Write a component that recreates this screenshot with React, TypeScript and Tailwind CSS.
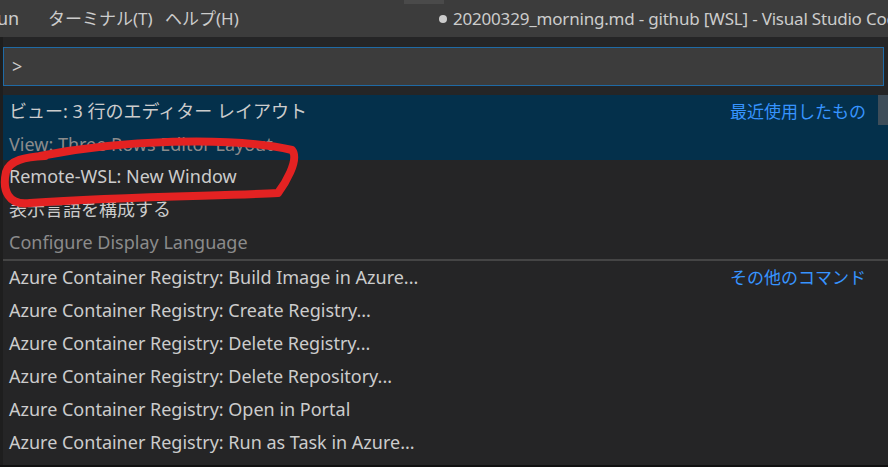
import React from 'react';

const FONT = { fontFamily: '"Noto Sans", "Noto Sans CJK JP", sans-serif' };

type Row = { label: string; detail?: string; tag?: string; selected?: boolean };

const recent: Row[] = [
  { label: 'ビュー: 3 行のエディター レイアウト', detail: 'View: Three Rows Editor Layout', tag: '最近使用したもの', selected: true },
  { label: 'Remote-WSL: New Window' },
  { label: '表示言語を構成する', detail: 'Configure Display Language' },
];

const others = [
  'Azure Container Registry: Build Image in Azure...',
  'Azure Container Registry: Create Registry...',
  'Azure Container Registry: Delete Registry...',
  'Azure Container Registry: Delete Repository...',
  'Azure Container Registry: Open in Portal',
  'Azure Container Registry: Run as Task in Azure...',
];

const CommandRow = ({ row }: { row: Row }) => (
  <div className={`flex pl-[6px] pr-[22px] ${row.selected ? 'bg-[#04304b]' : ''}`}>
    <div className="flex-1 min-w-0">
      <div className="h-[33px] flex items-center text-[#cccccc] whitespace-nowrap">{row.label}</div>
      {row.detail && (
        <div className={`${row.selected ? 'h-[32px]' : 'h-[33px]'} flex items-center text-[#8b8b8b] whitespace-nowrap`}>
          {row.detail}
        </div>
      )}
    </div>
    {row.tag && <div className="h-[33px] flex items-center text-[#3794ff] text-[17px]">{row.tag}</div>}
  </div>
);

export default function App() {
  return (
    <div className="w-[888px] h-[467px] bg-[#252526] overflow-hidden relative text-[18px]" style={FONT}>
      {/* Title bar */}
      <div className="h-[37px] bg-[#3c3c3c] flex items-center text-[#cccccc] relative whitespace-nowrap">
        <span className="absolute left-[404px] top-0 w-[40px] h-[4px] bg-[#4a4a4a]" />
        <span className="shrink-0 w-[48px] -ml-[3px]">un</span>
        <span className="shrink-0 w-[117px] pl-[3px] text-[17px]">ターミナル(T)</span>
        <span className="shrink-0 w-[276px] pl-[3px] text-[17px]">ヘルプ(H)</span>
        <span className="shrink-0 flex items-center text-[17px] tracking-[-0.2px]">
          <span className="w-[8px] h-[8px] rounded-full bg-[#cccccc] mr-[6px] ml-[1px]" />
          20200329_morning.md - github [WSL] - Visual Studio Code
        </span>
      </div>

      <div className="flex h-[430px]">
        <div className="w-[3px] bg-[#1e1e1e]" />
        <div className="flex-1 flex flex-col relative">
          <div className="pt-[10px] pr-[4px]">
            <div className="h-[39px] bg-[#3c3c3c] border border-[#1f6aa5] flex items-center pl-[8px] text-[#cccccc]">&gt;</div>
          </div>
          <div className="mt-[9px] relative">
            {recent.map((r) => (
              <CommandRow key={r.label} row={r} />
            ))}
            <div className="absolute right-0 top-0 w-[10px] h-[30px] bg-[#3e4d59]" />
          </div>
          <div className="h-[2px] bg-[#454545]" />
          <div>
            {others.map((label, i) => (
              <div key={label} className="h-[33px] flex items-center pl-[6px] pr-[22px] whitespace-nowrap">
                <span className="flex-1 text-[#cccccc]">{label}</span>
                {i === 0 && <span className="text-[#3794ff] text-[17px]">その他のコマンド</span>}
              </div>
            ))}
          </div>
        </div>
      </div>
      <div className="absolute left-0 bottom-0 w-full h-[2px] bg-[#111111]" />

      {/* red annotation */}
      <svg className="absolute left-0 top-0 pointer-events-none" width="888" height="467">
        <path
          d="M40 156 C 120 140, 230 136, 292 150 C 300 160, 284 185, 278 193 C 230 196, 130 196, 30 203 C 8 206, 2 190, 6 172 C 10 160, 25 157, 45 156"
          fill="none"
          stroke="#e32222"
          strokeWidth="8"
          strokeLinecap="round"
          strokeLinejoin="round"
        />
      </svg>
    </div>
  );
}
